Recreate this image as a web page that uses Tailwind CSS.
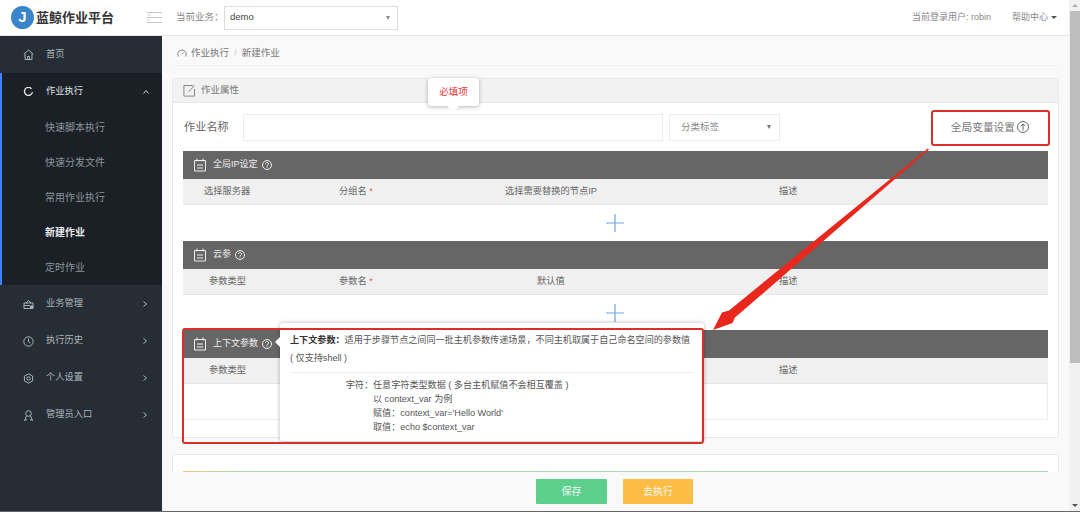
<!DOCTYPE html>
<html lang="zh">
<head>
<meta charset="utf-8">
<script src="https://cdn.jsdelivr.net/npm/@tailwindcss/browser@4"></script>
</head>
<body class="m-0 overflow-hidden bg-white">
<div class="relative flex h-[512px] w-[1080px] flex-col overflow-hidden border-b border-[#666] font-['Liberation_Sans','Noto_Sans_CJK_SC',sans-serif] text-[10px] text-[#666]">
  <div class="flex min-h-0 flex-1">
    <div class="flex min-w-0 flex-1 flex-col">
      <header class="flex h-[36px] shrink-0 items-center border-b border-[#e5e5e5] bg-white">
        <div class="flex w-[176px] shrink-0 items-center">
          <div class="ml-[11px] flex h-[23px] w-[23px] items-center justify-center rounded-full bg-[#3a84c9] text-[15px] font-bold text-white">J</div>
          <span class="ml-[2px] text-[13px] font-bold whitespace-nowrap text-[#333]">蓝鲸作业平台</span>
          <svg class="ml-[33px] shrink-0" width="15" height="11" viewBox="0 0 15 11" fill="none" stroke="#c4c4c4"><path d="M0 .5h15M0 5.500h15M0 10.500h15"/><path d="M0 3h4M0 8h4" stroke="#ddd"/></svg>
        </div>
        <span class="w-[48px] shrink-0 text-[9.500px] whitespace-nowrap text-[#888]">当前业务：</span>
        <div class="flex h-[24px] w-[174px] shrink-0 items-center justify-between border border-[#ddd] pr-[7px] pl-[5px] text-[9.500px] text-[#444]">
          <span>demo</span><span class="h-0 w-0 border-x-[2.500px] border-t-[4px] border-x-transparent border-t-[#888]"></span>
        </div>
        <div class="ml-auto flex items-center pr-[12px] text-[9px] text-[#888]">
          <span>当前登录用户: robin</span>
          <span class="ml-[21px]">帮助中心</span>
          <span class="ml-[3px] h-0 w-0 border-x-[3px] border-t-[3px] border-x-transparent border-t-[#555]"></span>
        </div>
      </header>
      <div class="flex min-h-0 flex-1">
        <aside class="flex w-[162px] shrink-0 flex-col bg-[#272d35] text-[9.250px] text-[#a9b4b8]">
          <div class="flex h-[37px] items-center pl-[23px]">
            <svg width="11" height="11" viewBox="0 0 11 11" fill="none" stroke="#a9b4b8"><path d="M.8 5.200 5.500 1l4.700 4.200M2 4.500v6h7v-6M4.500 10.500V7.500h2v3"/></svg>
            <span class="ml-[12px]">首页</span>
          </div>
          <div class="h-[212px] border-l-2 border-[#3a84ff] bg-[#1b1f26]">
            <div class="flex h-[37px] items-center pt-[1px] pl-[21px] text-[#dfe3e5]">
              <svg width="11" height="11" viewBox="0 0 11 11" fill="none" stroke="#e5e8ea" stroke-width="1.300"><path d="M8.500 1.800A4 4 0 1 0 9.400 5"/></svg>
              <span class="ml-[12px]">作业执行</span>
              <svg class="ml-[60px]" width="6" height="4" viewBox="0 0 6 4" fill="none" stroke="#cfd4d6"><path d="m.5 3.500 2.500-3 2.500 3"/></svg>
            </div>
            <div class="flex h-[35px] items-center pl-[43px] text-[10px] text-[#8b979c]">快速脚本执行</div>
            <div class="flex h-[35px] items-center pl-[43px] text-[10px] text-[#8b979c]">快速分发文件</div>
            <div class="flex h-[35px] items-center pl-[43px] text-[10px] text-[#8b979c]">常用作业执行</div>
            <div class="flex h-[35px] items-center pl-[43px] text-[10px] font-bold text-[#e6e9ea]">新建作业</div>
            <div class="flex h-[35px] items-center pl-[43px] text-[10px] text-[#8b979c]">定时作业</div>
          </div>
          <div class="flex h-[37px] items-center pt-[1px] pl-[23px]">
            <svg width="11" height="11" viewBox="0 0 11 11" fill="none" stroke="#a9b4b8"><path d="M1 4h9v5.500H1zM3 4 5.500 1.500 8 4M1 6.500h6"/><circle cx="8.700" cy="8" r="1.300" fill="#a9b4b8"/></svg>
            <span class="ml-[12px] w-[97px]">业务管理</span>
            <svg width="4" height="6" viewBox="0 0 4 6" fill="none" stroke="#a9b4b8"><path d="m.5.500 3 2.500-3 2.500"/></svg>
          </div>
          <div class="flex h-[37px] items-center pt-[1px] pl-[23px]">
            <svg width="11" height="11" viewBox="0 0 11 11" fill="none" stroke="#a9b4b8"><circle cx="5.500" cy="5.500" r="4.700"/><path d="M5.500 2.500v3.300l2 1.200"/></svg>
            <span class="ml-[12px] w-[97px]">执行历史</span>
            <svg width="4" height="6" viewBox="0 0 4 6" fill="none" stroke="#a9b4b8"><path d="m.5.500 3 2.500-3 2.500"/></svg>
          </div>
          <div class="flex h-[37px] items-center pt-[1px] pl-[23px]">
            <svg width="11" height="11" viewBox="0 0 11 11" fill="none" stroke="#a9b4b8"><path d="m5.500.8 4.100 2.300v4.800l-4.100 2.300-4.100-2.300V3.100z"/><circle cx="5.500" cy="5.500" r="1.700"/></svg>
            <span class="ml-[12px] w-[97px]">个人设置</span>
            <svg width="4" height="6" viewBox="0 0 4 6" fill="none" stroke="#a9b4b8"><path d="m.5.500 3 2.500-3 2.500"/></svg>
          </div>
          <div class="flex h-[37px] items-center pt-[1px] pl-[23px]">
            <svg width="11" height="11" viewBox="0 0 11 11" fill="none" stroke="#a9b4b8"><circle cx="5.500" cy="3.500" r="2.800"/><path d="m3.500 6-2 4.500 2.500-1M7.500 6l2 4.500-2.500-1"/></svg>
            <span class="ml-[12px] w-[97px]">管理员入口</span>
            <svg width="4" height="6" viewBox="0 0 4 6" fill="none" stroke="#a9b4b8"><path d="m.5.500 3 2.500-3 2.500"/></svg>
          </div>
        </aside>
        <main class="flex min-w-0 flex-1 flex-col bg-[#f9f9f9]">
          <div class="min-h-0 flex-1 overflow-hidden px-[10px]">
            <div class="flex h-[30px] items-center border-b border-[#f2f2f2] pt-[6px] pl-[5px] text-[9.500px] text-[#777]">
              <svg width="10" height="10" viewBox="0 0 10 10" fill="none" stroke="#888"><path d="M1.300 7.500a4.300 4.300 0 1 1 7.400 0M5 5l1.500-1.500"/></svg>
              <span class="ml-[4px]">作业执行</span><span class="mx-[5px] text-[#ccc]">/</span><span>新建作业</span>
            </div>
            <section class="mt-[12px] h-[360px] rounded-[3px] border border-[#e9e9e9] bg-white">
              <div class="flex h-[24px] items-center border-b border-[#e8e8e8] bg-[#f2f2f2] pl-[10px] text-[9.500px] text-[#777]">
                <svg width="13" height="13" viewBox="0 0 13 13" fill="none" stroke="#888"><path d="M10 1.500H.9v10.600h10.600V5M5.500 8l6-6.500"/></svg>
                <span class="ml-[5px]">作业属性</span>
              </div>
              <div class="flex h-[48px] items-center pl-[11px] pr-[29px]">
                <span class="w-[59px] text-[11.200px] text-[#666]">作业名称</span>
                <div class="h-[27px] w-[420px] border border-[#ececec]"></div>
                <div class="ml-[6px] flex h-[27px] w-[111px] items-center justify-between border border-[#ececec] pr-[8px] pl-[11px] text-[9.500px] text-[#888]">
                  <span>分类标签</span><span class="h-0 w-0 border-x-[2.500px] border-t-[4px] border-x-transparent border-t-[#777]"></span>
                </div>
                <div class="ml-auto flex items-center text-[10.700px] text-[#777]">
                  <span>全局变量设置</span>
                  <svg class="ml-[2px]" width="12" height="12" viewBox="0 0 12 12" fill="none" stroke="#666"><circle cx="6" cy="6" r="5.500"/><path d="M6 9.500V3M3.800 5.200 6 3l2.200 2.200"/></svg>
                </div>
              </div>

              <div class="mx-[10px]">
                <div class="flex h-[28px] items-center bg-[#666] pl-[10px] text-[9px] text-[#eee]">
                  <svg width="14" height="14" viewBox="0 0 14 14" fill="none" stroke="#eee"><path d="M1.500 2.500h11v10.500h-11zM4 .5v3M10 .5v3M4 7h6M4 10h6"/></svg>
                  <span class="ml-[6px]">全局IP设定</span>
                  <svg class="ml-[4px]" width="10" height="10" viewBox="0 0 10 10" fill="none" stroke="#eee"><circle cx="5" cy="5" r="4.500"/><path d="M3.500 3.800a1.500 1.500 0 1 1 2.300 1.300L5 5.800v.7M5 7.200v.8"/></svg>
                </div>
                <div class="flex h-[26px] items-center border-b border-[#e6e6e6] bg-[#f0f0f0] pt-[1px] pl-[21px] text-[9.250px] text-[#666]">
                  <span class="w-[135px]">选择服务器</span>
                  <span class="w-[166px]">分组名 <span class="text-[#e55]">*</span></span>
                  <span class="w-[274px]">选择需要替换的节点IP</span>
                  <span>描述</span>
                </div>
                <div class="flex h-[36px] items-center justify-center">
                  <svg class="-ml-[2px]" width="18" height="18" viewBox="0 0 18 18" stroke="#6ea5dc" stroke-width="1.200"><path d="M9 0v18M0 9h18"/></svg>
                </div>

                <div class="flex h-[28px] items-center bg-[#666] pl-[10px] text-[9px] text-[#eee]">
                  <svg width="14" height="14" viewBox="0 0 14 14" fill="none" stroke="#eee"><path d="M1.500 2.500h11v10.500h-11zM4 .5v3M10 .5v3M4 7h6M4 10h6"/></svg>
                  <span class="ml-[6px]">云参</span>
                  <svg class="ml-[4px]" width="10" height="10" viewBox="0 0 10 10" fill="none" stroke="#eee"><circle cx="5" cy="5" r="4.500"/><path d="M3.500 3.800a1.500 1.500 0 1 1 2.300 1.300L5 5.800v.7M5 7.200v.8"/></svg>
                </div>
                <div class="flex h-[26px] items-center border-b border-[#e6e6e6] bg-[#f0f0f0] pt-[1px] pl-[26px] text-[9.250px] text-[#666]">
                  <span class="w-[130px]">参数类型</span>
                  <span class="w-[198px]">参数名 <span class="text-[#e55]">*</span></span>
                  <span class="w-[242px]">默认值</span>
                  <span>描述</span>
                </div>
                <div class="flex h-[35px] items-center justify-center">
                  <svg class="-ml-[2px]" width="18" height="18" viewBox="0 0 18 18" stroke="#6ea5dc" stroke-width="1.200"><path d="M9 0v18M0 9h18"/></svg>
                </div>

                <div class="flex h-[28px] items-center bg-[#666] pl-[10px] text-[9px] text-[#eee]">
                  <svg width="14" height="14" viewBox="0 0 14 14" fill="none" stroke="#eee"><path d="M1.500 2.500h11v10.500h-11zM4 .5v3M10 .5v3M4 7h6M4 10h6"/></svg>
                  <span class="ml-[6px]">上下文参数</span>
                  <svg class="ml-[4px]" width="10" height="10" viewBox="0 0 10 10" fill="none" stroke="#eee"><circle cx="5" cy="5" r="4.500"/><path d="M3.500 3.800a1.500 1.500 0 1 1 2.300 1.300L5 5.800v.7M5 7.200v.8"/></svg>
                </div>
                <div class="flex h-[26px] items-center border-b border-[#e6e6e6] bg-[#f0f0f0] pt-[1px] pl-[26px] text-[9.250px] text-[#666]">
                  <span class="w-[570px]">参数类型</span>
                  <span>描述</span>
                </div>
                <div class="h-[36px] border-x border-b border-[#eee]"></div>
              </div>
            </section>
            <section class="mt-[16px] h-[40px] rounded-[3px] border border-[#e9e9e9] bg-white">
              <div class="mx-[10px] mt-[16px] h-[1px] bg-gradient-to-r from-[#f5c57a] via-[#a8d6a8] via-[6%] to-[#a8d6a8]"></div>
            </section>
          </div>
          <footer class="flex h-[39px] shrink-0 items-start justify-center gap-[16px] bg-[#f9f9f9] pt-[7px] pr-[2px] text-[10px] text-[#f4fbf7]">
            <div class="flex h-[25px] w-[71px] items-center justify-center rounded-[1px] bg-[#5ccf8d]">保存</div>
            <div class="flex h-[25px] w-[70px] items-center justify-center rounded-[1px] bg-[#fdbd44]">去执行</div>
          </footer>
        </main>
      </div>
    </div>
    <div class="flex w-[11px] shrink-0 flex-col items-center bg-[#f1f1f1]">
      <span class="mt-[4px] h-0 w-0 border-x-[3px] border-b-[3px] border-x-transparent border-b-[#aaa]"></span>
      <div class="mt-[4px] h-[352px] w-[10px] bg-[#bdbdbd]"></div>
      <span class="mt-auto mb-[4px] h-0 w-0 border-x-[3px] border-t-[3px] border-x-transparent border-t-[#555]"></span>
    </div>
  </div>

  <!-- required-field tooltip -->
  <div class="absolute top-[78px] left-[428px] flex h-[28px] w-[51px] items-center justify-center rounded-[3px] bg-white text-[9.500px] text-[#e33] shadow-[0_1px_4px_rgba(0,0,0,0.3)]">必填项
    <span class="absolute top-[28px] left-[19px] h-0 w-0 border-x-[6px] border-t-[6px] border-x-transparent border-t-white"></span>
  </div>

  <!-- help popover -->
  <div class="absolute top-[323px] left-[280px] h-[118px] w-[424px] rounded-[3px] bg-white px-[10px] pt-[9px] font-['Liberation_Sans','Noto_Sans_CJK_TC',sans-serif] text-[9.100px] text-[#555] shadow-[0_0_4px_rgba(0,0,0,0.3)]">
    <span class="absolute top-[14px] left-[-5px] h-0 w-0 border-y-[5px] border-r-[5px] border-y-transparent border-r-white"></span>
    <p class="leading-[17.500px]"><b class="text-[#333]">上下文参数：</b>适用于步骤节点之间同一批主机参数传递场景，不同主机取属于自己命名空间的参数值<br>( 仅支持shell )</p>
    <div class="mt-[5px] flex border-t border-[#eee] pt-[5px] leading-[14px]">
      <span class="w-[83px] shrink-0 text-right">字符：</span>
      <div>
        <div>任意字符类型数据 ( 多台主机赋值不会相互覆盖 )</div>
        <div>以 context_var 为例</div>
        <div>赋值：context_var='Hello World'</div>
        <div>取值：echo $context_var</div>
      </div>
    </div>
  </div>

  <!-- annotations -->
  <div class="pointer-events-none absolute top-[328px] left-[182px] h-[116px] w-[522px] rounded-[3px] border-2 border-[#d9302a]"></div>
  <div class="pointer-events-none absolute top-[110px] left-[931px] h-[36px] w-[119px] rounded-[3px] border-2 border-[#d9302a]"></div>
  <svg class="pointer-events-none absolute top-0 left-0" width="1080" height="512" viewBox="0 0 1080 512">
    <path d="M929 149.600 735 317.500 732.500 323 713 330 722 312.500 729 310.500 927.800 148.400z" fill="#e8281c"/>
  </svg>
</div>
</body>
</html>
